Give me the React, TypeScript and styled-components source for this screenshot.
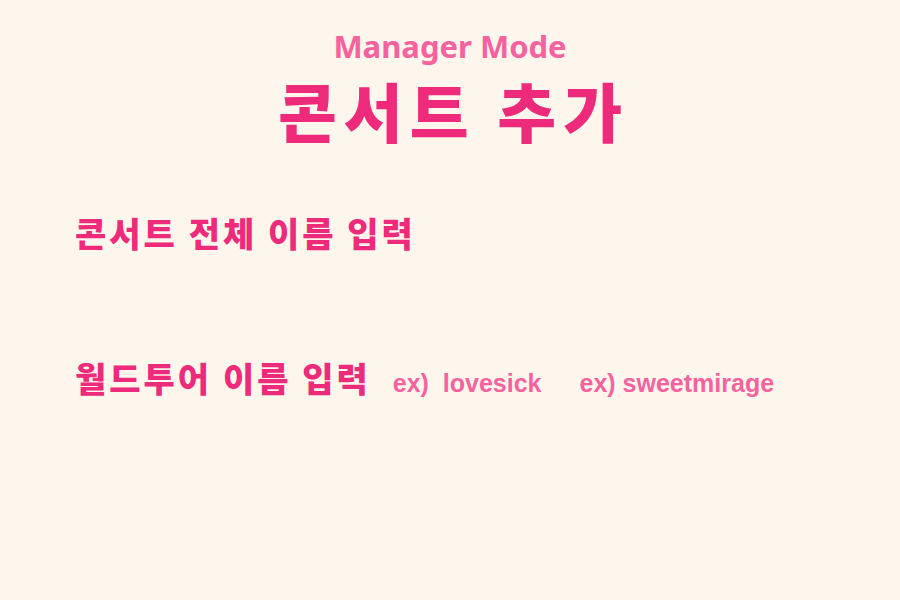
import React from "react";
import styled, { createGlobalStyle } from "styled-components";

const Global = createGlobalStyle`
  html, body { margin: 0; padding: 0; background: #fdf6ec; }
  body { font-family: "Noto Sans CJK KR", "Noto Sans", sans-serif; }
`;

const Page = styled.div`
  width: 900px;
  height: 600px;
  background: #fdf6ec;
  display: flex;
  flex-direction: column;
  box-sizing: border-box;
  padding: 28px 0 0 0;
`;

const Header = styled.header`
  display: flex;
  flex-direction: column;
  align-items: center;
`;

const Mode = styled.div`
  font-family: "Noto Sans", sans-serif;
  font-weight: 700;
  font-size: 31px;
  line-height: 36px;
  color: #f5629e;
`;

const Title = styled.h1`
  margin: 7px 0 0 0;
  font-family: "Noto Sans CJK KR", sans-serif;
  font-weight: 900;
  font-size: 64px;
  line-height: 76px;
  color: #ee2a7b;
  letter-spacing: 7px;
  padding-left: 7px;
`;

const Form = styled.section`
  display: flex;
  flex-direction: column;
  padding: 62px 0 0 75px;
  gap: 97px;
`;

const Row = styled.div`
  display: flex;
  align-items: baseline;
`;

const Label = styled.h2`
  margin: 0;
  font-family: "Noto Sans CJK KR", sans-serif;
  font-weight: 900;
  font-size: 34px;
  line-height: 48px;
  color: #ee2a7b;
  letter-spacing: 3px;
`;

const Example = styled.span<{ $gap: number }>`
  margin-left: ${(p) => p.$gap}px;
  font-family: "Liberation Sans", Arial, sans-serif;
  font-weight: 700;
  font-size: 25px;
  color: #f5629e;
`;

export default function App() {
  return (
    <>
      <Global />
      <Page>
        <Header>
          <Mode>Manager Mode</Mode>
          <Title>콘서트 추가</Title>
        </Header>
        <Form>
          <Row>
            <Label>콘서트 전체 이름 입력</Label>
          </Row>
          <Row>
            <Label>월드투어 이름 입력</Label>
            <Example $gap={22}>ex)&nbsp; lovesick</Example>
            <Example $gap={38}>ex) sweetmirage</Example>
          </Row>
        </Form>
      </Page>
    </>
  );
}
